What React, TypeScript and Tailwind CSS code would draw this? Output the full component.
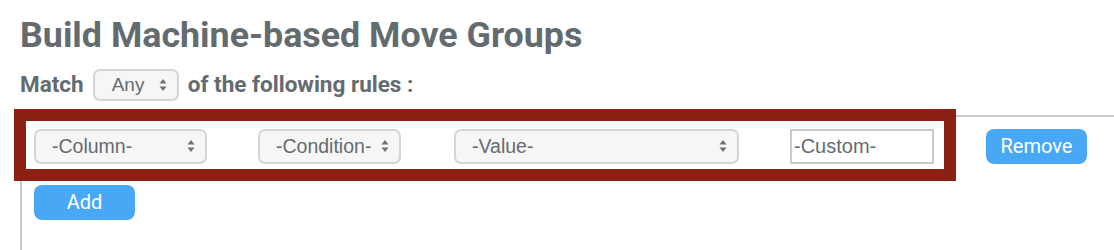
import type { ReactNode } from 'react';

function Arrows() {
  return (
    <svg width="8" height="14" viewBox="0 0 8 14" className="shrink-0">
      <path d="M4 1 L7.5 5.5 H0.5 Z" fill="#6b7177" />
      <path d="M4 13 L7.5 8.5 H0.5 Z" fill="#6b7177" />
    </svg>
  );
}

function FakeSelect({ label, className = '' }: { label: ReactNode; className?: string }) {
  return (
    <div
      className={`flex items-center justify-between h-[35px] rounded-[7px] border-2 border-[#d3d5d7] bg-[#f6f6f6] pl-[16px] pr-[10px] text-[19.5px] text-[#656b70] font-['Liberation_Sans',sans-serif] ${className}`}
    >
      <span className="truncate">{label}</span>
      <Arrows />
    </div>
  );
}

export default function App() {
  return (
    <div className="min-h-[250px] bg-white pl-[20px] pt-[13px] font-['Roboto',sans-serif]">
      <h1 className="text-[35.8px] font-bold text-[#636b6f] leading-[44px]">
        Build Machine-based Move Groups
      </h1>

      <div className="mt-[11px] flex items-center gap-[9px] text-[22.5px] font-bold text-[#636b6f]">
        <span>Match</span>
        <div className="flex items-center justify-between w-[86px] h-[32px] rounded-[7px] border-2 border-[#d3d5d7] bg-[#f6f6f6] pl-[17px] pr-[10px] text-[19px] font-normal text-[#656b70] font-['Liberation_Sans',sans-serif]">
          <span>Any</span>
          <Arrows />
        </div>
        <span>of the following rules :</span>
      </div>

      <div className="relative mt-[13px] border-l-2 border-t-2 border-[#c8cacc] pl-[12px] pt-[12px] pb-[30px]">
        <div className="flex items-center">
          <FakeSelect label="-Column-" className="w-[173px]" />
          <FakeSelect label="-Condition-" className="w-[143px] ml-[51px]" />
          <FakeSelect label="-Value-" className="w-[285px] ml-[53px]" />
          <input
            readOnly
            value="-Custom-"
            className="ml-[51px] w-[144px] h-[35px] border-2 border-[#c8cacc] bg-white px-[2px] text-[20px] text-[#656b70] outline-none font-['Liberation_Sans',sans-serif]"
          />
          <button className="ml-[52px] w-[101px] h-[35px] rounded-[8px] bg-[#49a8f6] text-[20px] text-white">
            Remove
          </button>
        </div>
        <button className="mt-[21px] w-[101px] h-[35px] rounded-[8px] bg-[#49a8f6] text-[20px] text-white">
          Add
        </button>

        <div className="pointer-events-none absolute left-[-8px] top-[-8px] w-[942px] h-[72px] border-[12px] border-[#8a2112]" />
      </div>
    </div>
  );
}
